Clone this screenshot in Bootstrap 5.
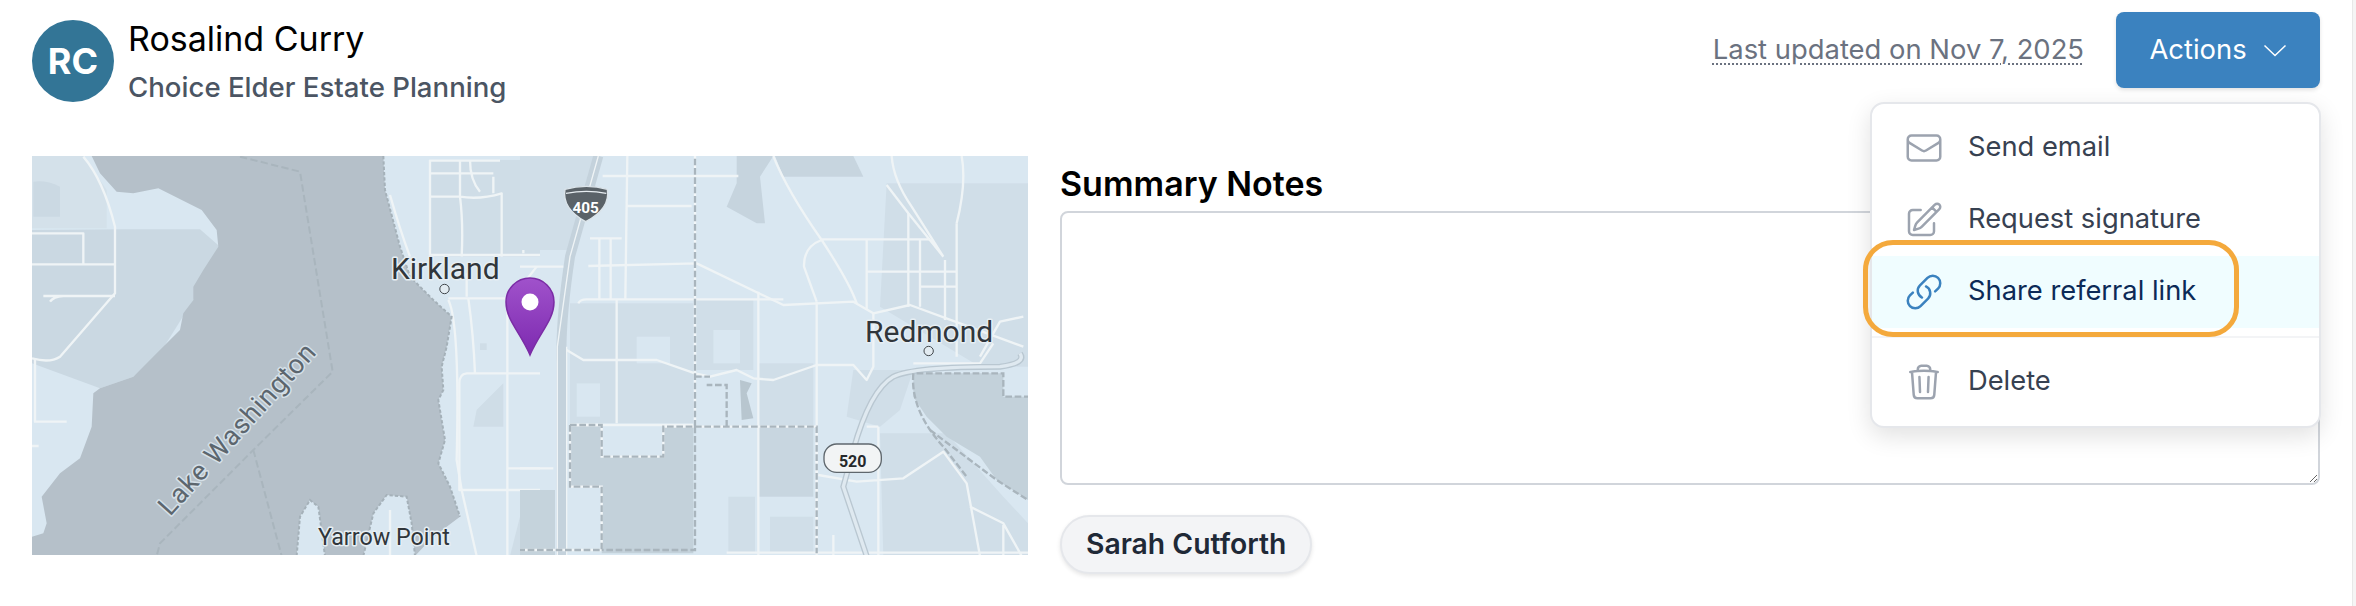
<!doctype html>
<html lang="en"><head><meta charset="utf-8"><title>Rosalind Curry</title>
<link href="https://cdn.jsdelivr.net/npm/bootstrap@5.3.0/dist/css/bootstrap.min.css" rel="stylesheet">
<style>
html,body{height:100%;overflow:hidden}
body{font-family:Inter,"Liberation Sans",sans-serif;background:#fff;color:#000}
.sheet{padding:20px 36px 0 32px;position:relative;height:606px}
.avatar{width:82px;height:82px;background:#337596;color:#fff;font-size:36px;font-weight:700;flex:none}
.who{margin-left:14px}
.who-name{font-size:34px;line-height:40px;margin-top:-1px;color:#000}
.who-org{font-size:27.600px;font-weight:500;line-height:40px;color:#4b5563;margin-top:8px}
.updated{font-size:27.400px;color:#6b7280;text-decoration:underline dotted 2px;text-underline-offset:4px;margin-right:32px;margin-top:-8px}
.act{background:#3b82bf;border:0;color:#fff;font-size:27.400px;height:76px;width:204px;border-radius:8px;margin-top:-8px;box-shadow:0 2px 4px rgba(0,0,0,.12)}
.content{margin-top:49px}
.mapbox{width:996px;height:399px;flex:none;display:block}
.notes{margin-left:32px;flex:1;min-width:0}
.notes h2{font-size:34px;font-weight:600;line-height:40px;margin:0;padding-top:8px;color:#000}
.notes textarea{height:274px;border:2px solid #d1d5db;border-radius:8px;display:block;width:100%;margin-top:7px;resize:vertical}
.chip{display:block;width:fit-content;margin-top:30px;height:59px;padding:0 24px;line-height:55px;background:#f3f4f6;border:2px solid #e5e7eb;border-radius:30px;font-size:28.300px;font-weight:600;color:#1f2937;box-shadow:0 2px 4px rgba(0,0,0,.1)}
.menu-box{position:absolute;left:1870px;top:102px;width:451px;background:#fff;border:2px solid #e5e7eb;border-radius:14px;box-shadow:0 8px 24px rgba(0,0,0,.12);padding:8px 0}
.menu-row{height:72px;display:flex;align-items:center;padding:0 0 1px 32px;font-size:27.300px;color:#374151;position:relative}
.menu-row svg{width:40px;height:40px;margin-right:24px;flex:none;color:#9ca3af}
.menu-row.on{background:#f0fdff;color:#0c2a57}
.menu-row.on svg{color:#3b82bf}
.ring{position:absolute;left:-9px;top:-16px;width:376px;height:97px;border:5px solid #f4a93c;border-radius:30px}
.rule{height:2px;background:#f3f4f6;margin:8px 0}
.edge{position:absolute;right:0;top:0;bottom:0;width:4px;background:#f5f5f5;border-left:1px solid #e8e8e8}
.map-label{font-family:Roboto,"Liberation Sans",sans-serif;paint-order:stroke;stroke:#e6eef3;stroke-width:3px;stroke-linejoin:round;fill:#30363b}
.map-lake{fill:#5c666e;stroke:#d5e0e8}
</style></head><body>
<div class="sheet">
 <div class="d-flex align-items-start">
  <div class="avatar rounded-circle d-flex align-items-center justify-content-center">RC</div>
  <div class="who"><div class="who-name">Rosalind Curry</div><div class="who-org">Choice Elder Estate Planning</div></div>
  <div class="ms-auto d-flex align-items-center"><span class="updated">Last updated on Nov 7, 2025</span>
  <button class="btn act d-flex align-items-center justify-content-center" type="button">Actions<svg class="ms-3" width="24" height="13" viewBox="0 0 24 13" fill="none" stroke="currentColor" stroke-width="1.500"><path d="M1.500 1.500L12 11.500 22.500 1.500"/></svg></button></div>
 </div>
 <div class="d-flex content align-items-start">
  <svg class="mapbox" viewBox="0 0 996 399" aria-label="Map">
   <defs><linearGradient id="pg" x1="0" y1="0" x2="0" y2="1"><stop offset="0" stop-color="#a052cb"/><stop offset="1" stop-color="#7d2ab0"/></linearGradient></defs>
   <rect width="996" height="399" fill="#d9e7f1"/>
   <g transform="translate(-12,-6) scale(.33333)">
    <g fill="#cfdde7">
     <path d="M36 18H190L260 120V235H36Z" fill="#d4e1ea"/><path d="M40 95Q80 90 120 110V200H40Z" fill="#cbd9e3"/>
     <path d="M320 238H540L600 290 520 450 420 610 340 680 240 715 36 640V240Z" fill="#cad8e2"/>
     <path d="M1230 30H1560V320H1230Z"/><path d="M1500 1100H1560V1218H1470Z"/><path d="M1370 780L1450 700V830H1360Z"/><path d="M1380 580H1400V600H1380Z"/>
    </g>
    <path fill="#b5c0c9" d="M215 18L240 70 290 125 340 130 415 115 545 180 590 240 595 290 550 360 520 410 520 450 490 490 480 540 410 610 340 680 240 715 220 730 215 830 180 925 120 970 65 1040 80 1120 70 1150 36 1160V1218H830L840 1100 870 1050 895 1070 915 1218H1030L1060 1090 1100 1035 1160 1040 1175 1120 1185 1218 1230 1170 1280 1130 1320 1100 1290 1010 1255 940 1275 870 1255 750 1270 720 1265 650 1280 590 1295 500 1240 450 1170 380 1140 290 1095 120 1090 18Z"/>
    <g fill="none" stroke="#eff4f6" stroke-width="7" stroke-linejoin="round">
     <path d="M190 20Q250 90 285 230V430L120 620Q90 640 36 625"/><path d="M36 250H190V340M36 343H285M70 438H285M90 455Q100 440 130 438"/><path d="M45 630V815H140M36 888H56"/>
     <path d="M1110 135Q1140 240 1170 320M1230 30V320M1228 32H1440M1228 70H1420M1228 140H1320Q1380 150 1445 130V320M1320 30V140M1320 140Q1330 220 1325 320M1350 30Q1350 90 1380 125M1420 80V130M1510 220V310M1228 315H1560"/>
     <path d="M1340 370V440M1285 445H1460Q1490 430 1550 350"/><path d="M1285 450Q1320 520 1310 930L1325 1020 1370 1218"/><path d="M1345 445Q1360 550 1365 670H1560M1365 670H1340Q1318 672 1318 700V1020H1560M1462 450V1218M1462 955H1560"/>
     <path d="M1110 1218V1080"/>
    </g>
    <g fill="none" stroke="#a9b5bd" stroke-width="6" stroke-dasharray="22 10">
     <path d="M660 20L840 65 938 665 700 900 420 1180 410 1218M700 900L785 1218"/>
    </g>
    <g fill="none" stroke="#a5b1b9" stroke-width="6" stroke-dasharray="10 6">
     <path d="M1090 18L1095 120 1140 290 1170 380 1240 450 1295 500 1280 590 1265 650 1270 720 1255 750 1275 870 1255 940 1290 1010 1320 1100M830 1218L840 1100 870 1050 895 1070 915 1218M1030 1218L1060 1090 1100 1035 1160 1040 1175 1120 1185 1218"/>
    </g>
   </g>
   <g transform="translate(488,-6) scale(.33333)">
    <g fill="#d0dee8">
     <path d="M0 18H230L170 300H0Z"/><path d="M650 18H760L720 80 735 220H710L620 170 650 100Z" fill="#c6d4de"/><path d="M765 18H1000L1030 80H790Z" fill="#c7d5df"/>
     <path d="M150 460H520V820H150Z"/><path d="M0 1020H105V1218H0Z" fill="#c5d3dc"/><path d="M530 450H700V660H530Z"/><path d="M580 540H660V640H580Z" fill="#d9e7f1"/><path d="M715 640H880V830H715Z"/><path d="M715 830H880V1040H715Z" fill="#c8d6e0"/><path d="M625 1040H705V1210H625Z"/><path d="M750 1100H880V1210H750Z"/><path d="M1100 100H1524V650H1380L1080 470Z"/><path d="M1000 660H1180L1140 780 1080 830 980 800Z"/><path d="M1080 850H1280L1450 1040 1524 1120V1218H1090Z"/>
     <path d="M350 560H450V640H350Z" fill="#d9e7f1"/><path d="M170 700H240V800H170Z" fill="#d9e7f1"/>
    </g>
    <path fill="#c3d1da" d="M150 825H245V920H430V830H520V1210H245V1010H150Z"/>
    <path fill="#c3d1da" d="M1180 670H1450V740H1524V1050L1430 990 1380 920 1280 860 1220 800 1180 740Z"/>
    <path fill="#b8c6cf" d="M660 690L695 700 680 730 700 805 665 810 662 740Z"/>
    <path fill="none" stroke="#c4d2dc" stroke-width="30" d="M235 18L150 320Q120 520 125 640V1218"/>
    <path fill="none" stroke="#eff4f6" stroke-width="4" d="M235 18L150 320Q130 460 112 590V1218M140 590V1218"/>
    <g fill="none" stroke="#eff4f6" stroke-width="7" stroke-linejoin="round">
     <path d="M0 350H130M205 348L530 340 790 465 1000 455 1060 490 1170 465 1320 520 1510 590"/><path d="M248 78H655M322 18L316 445M322 168H515M210 265H305M238 265V445M272 265V445M175 460Q180 448 200 448H790"/><path d="M290 448V820M140 600L190 630H410L525 670 570 680 650 660 700 685 760 690 890 645H1000L1040 690 1060 650 1060 490"/><path d="M150 825H520M0 955H100M715 425V1218M890 455V1218"/><path d="M760 18Q800 120 905 270 990 400 1010 460M905 270Q850 290 852 350 870 400 890 455M905 268H1230M1040 268V480M1040 365H1310M1200 268V470M1165 190V470M1200 410H1310M1275 330V510M1310 220V620"/><path d="M1100 105L1165 190 1270 320M1115 18Q1120 90 1175 170L1270 320M1325 18Q1340 100 1310 220"/><path d="M895 975L1010 995 1150 985 1270 905 1340 1000 1380 1218M1350 1070L1450 1120 1505 1218M1450 1125V1218M1075 830V1218M1040 830H1075M940 1155V1218M620 1208H1524"/><path d="M1180 640H1380L1420 580M1510 500L1440 515 1380 620"/>
    </g>
    <path fill="none" stroke="#b9c7d1" stroke-width="18" d="M1000 900Q1050 720 1120 680 1180 650 1440 650 1520 640 1500 610M1000 900L970 1010 1040 1218"/>
    <path fill="none" stroke="#dfe9f0" stroke-width="10" d="M1000 900Q1050 720 1120 680 1180 650 1440 650 1520 640 1500 610M1000 900L970 1010 1040 1218"/>
    <g fill="none" stroke="#f2f6f8" stroke-width="7">
     <path d="M150 825H245V920H430V830H890V1210M150 825V1010H245V1200H0M525 830V18"/>
    </g>
    <g fill="none" stroke="#a9b5bd" stroke-width="7" stroke-dasharray="20 8">
     <path d="M150 825H245V920H430V830H890V1210M620 830V705H560M525 680H570M525 830V18M150 825V1010H245V1200H0M525 830V1200H245M1190 670H1450V740H1524M1180 670Q1170 780 1270 890L1340 980M1230 840L1430 990 1524 1050"/>
    </g>
    <path d="M135 118Q200 100 262 118 272 175 197 215 125 175 135 118Z" fill="#5a6268" stroke="#dbe4ea" stroke-width="4"/>
    <path d="M138 130Q200 118 259 130" fill="none" stroke="#e7edf1" stroke-width="4"/>
    <text x="197" y="190" text-anchor="middle" fill="#fff" font-family="Roboto" font-weight="700" font-size="46">405</text>
    <rect x="912" y="882" width="172" height="85" rx="38" fill="#f2f4f5" stroke="#5f676d" stroke-width="4"/>
    <text x="998" y="952" text-anchor="middle" fill="#26292b" font-family="Roboto" font-weight="700" font-size="48">520</text>
    <circle cx="1226" cy="603" r="14" fill="#e2ebf1" stroke="#40464b" stroke-width="3"/>
   </g>
   <circle cx="412.500" cy="133" r="4.700" fill="#e2ebf1" stroke="#40464b"/>
   <text class="map-label" x="359" y="123" font-size="30">Kirkland</text>
   <text class="map-label" x="833" y="186" font-size="30">Redmond</text>
   <text class="map-label" x="286" y="389" font-size="23.300">Yarrow Point</text>
   <text class="map-label map-lake" font-size="27" transform="translate(138,361) rotate(-48)" letter-spacing="1">Lake Washington</text>
   <path d="M498 199C488 176 474 164 474 146A24 24 0 1 1 522 146C522 164 508 176 498 199Z" fill="url(#pg)" stroke="#7b2ca5" stroke-width="1.500"/>
   <circle cx="498" cy="146" r="8.500" fill="#fff"/>
  </svg>
  <div class="notes"><h2>Summary Notes</h2><textarea class="form-control" aria-label="Summary Notes"></textarea><span class="chip">Sarah Cutforth</span></div>
 </div>
 <div class="menu-box">
  <div class="menu-row"><svg viewBox="0 0 24 24" fill="none" stroke="currentColor" stroke-width="1.500" stroke-linecap="round" stroke-linejoin="round"><path d="M21.750 6.750v10.500a2.250 2.250 0 0 1-2.250 2.250h-15a2.250 2.250 0 0 1-2.250-2.250V6.750m19.500 0A2.250 2.250 0 0 0 19.500 4.500h-15a2.250 2.250 0 0 0-2.250 2.250m19.500 0v.243a2.250 2.250 0 0 1-1.070 1.916l-7.500 4.615a2.250 2.250 0 0 1-2.360 0L3.320 8.910a2.250 2.250 0 0 1-1.070-1.916V6.750"/></svg>Send email</div>
  <div class="menu-row"><svg viewBox="0 0 24 24" fill="none" stroke="currentColor" stroke-width="1.500" stroke-linecap="round" stroke-linejoin="round"><path d="M16.862 4.487l1.687-1.688a1.875 1.875 0 1 1 2.652 2.652L10.582 16.070a4.500 4.500 0 0 1-1.897 1.130L6 18l.8-2.685a4.500 4.500 0 0 1 1.130-1.897l8.932-8.931zm0 0L19.500 7.125M18 14v4.750A2.250 2.250 0 0 1 15.750 21H5.250A2.250 2.250 0 0 1 3 18.750V8.250A2.250 2.250 0 0 1 5.250 6H10"/></svg>Request signature</div>
  <div class="menu-row on"><svg viewBox="0 0 24 24" fill="none" stroke="currentColor" stroke-width="1.500" stroke-linecap="round" stroke-linejoin="round"><path d="M13.190 8.688a4.500 4.500 0 0 1 1.242 7.244l-4.500 4.500a4.500 4.500 0 0 1-6.364-6.364l1.757-1.757m13.350-.622l1.757-1.757a4.500 4.500 0 0 0-6.364-6.364l-4.500 4.500a4.500 4.500 0 0 0 1.242 7.244"/></svg>Share referral link<span class="ring"></span></div>
  <div class="rule"></div>
  <div class="menu-row"><svg viewBox="0 0 24 24" fill="none" stroke="currentColor" stroke-width="1.500" stroke-linecap="round" stroke-linejoin="round"><path d="M14.740 9l-.346 9m-4.788 0L9.260 9m9.968-3.210c.342.052.682.107 1.022.166m-1.022-.165L18.160 19.673a2.250 2.250 0 0 1-2.244 2.077H8.084a2.250 2.250 0 0 1-2.244-2.077L4.772 5.790m14.456 0a48.108 48.108 0 0 0-3.478-.397m-12 .562c.34-.059.68-.114 1.022-.165m0 0a48.110 48.110 0 0 1 3.478-.397m7.500 0v-.916c0-1.180-.91-2.164-2.090-2.201a51.964 51.964 0 0 0-3.320 0c-1.180.037-2.090 1.022-2.090 2.201v.916m7.500 0a48.667 48.667 0 0 0-7.500 0"/></svg>Delete</div>
 </div>
 <div class="edge"></div>
</div>
<script src="https://cdn.jsdelivr.net/npm/bootstrap@5.3.0/dist/js/bootstrap.bundle.min.js"></script>
</body></html>
